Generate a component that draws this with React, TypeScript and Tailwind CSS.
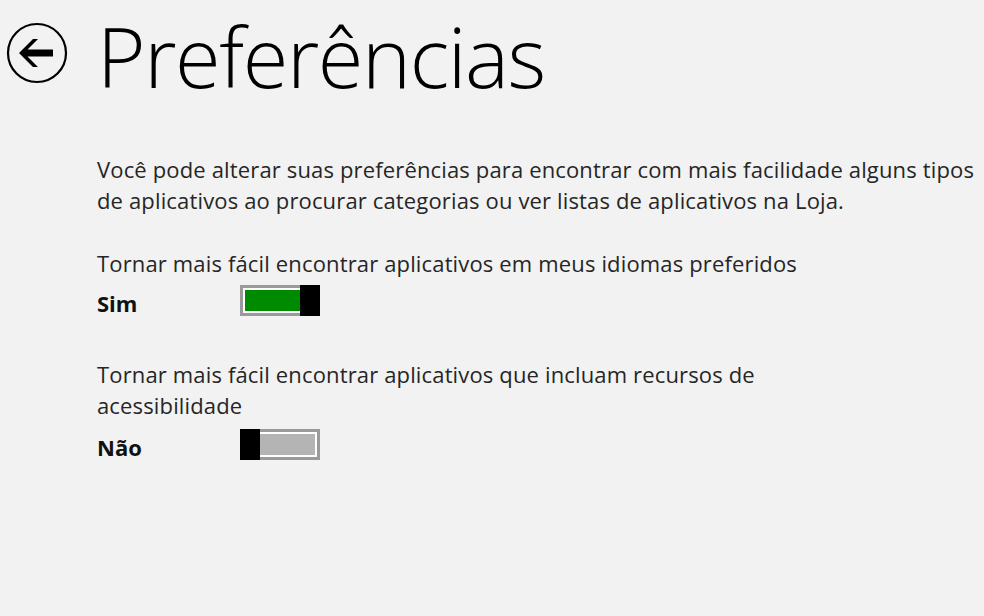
import React, { useState } from 'react';

interface ToggleProps {
  on: boolean;
  onChange: (v: boolean) => void;
}

const Toggle: React.FC<ToggleProps> = ({ on, onChange }) => {
  return (
    <button
      onClick={() => onChange(!on)}
      className="flex h-[31px] w-[80px] items-stretch"
    >
      {on ? (
        <>
          <div className="flex-1 border-[3px] border-r-0 border-[#9a9a9a] bg-white p-[2px] pr-0">
            <div className="h-full w-full bg-[#008a00]" />
          </div>
          <div className="w-[20px] bg-black" />
        </>
      ) : (
        <>
          <div className="w-[20px] bg-black" />
          <div className="flex-1 border-[3px] border-l-0 border-[#9a9a9a] bg-white p-[2px] pl-0">
            <div className="h-full w-full bg-[#b4b4b4]" />
          </div>
        </>
      )}
    </button>
  );
};

const BackButton = () => (
  <svg width="62" height="62" viewBox="0 0 62 62">
    <circle cx="31" cy="31" r="29" fill="none" stroke="#000" strokeWidth="2.2" />
    <path d="M13 31 L27 17 L32 17 L21.5 27.5 L47 27.5 L47 34.5 L21.5 34.5 L32 45 L27 45 Z" fill="#000" />
  </svg>
);

export default function App() {
  const [lang, setLang] = useState(true);
  const [access, setAccess] = useState(false);

  return (
    <div
      className="h-[616px] w-[984px] overflow-hidden bg-[#f2f2f2] text-[#262626]"
      style={{ fontFamily: '"Open Sans", "Liberation Sans", sans-serif' }}
    >
      <div className="flex items-start pl-[6px]">
        <div className="mt-[22px]">
          <BackButton />
        </div>
        <h1 className="ml-[29px] text-[83px] font-light leading-[112px] tracking-[-1.4px] text-black">
          Preferências
        </h1>
      </div>

      <div className="pl-[97px] pt-[42px] text-[22px] leading-[31px] tracking-[0.15px]">
        <p className="whitespace-nowrap">
          Você pode alterar suas preferências para encontrar com mais facilidade alguns tipos
          <br />
          de aplicativos ao procurar categorias ou ver listas de aplicativos na Loja.
        </p>

        <div className="mt-[32px]">
          <p>Tornar mais fácil encontrar aplicativos em meus idiomas preferidos</p>
          <div className="mt-[6px] flex h-[31px] items-center">
            <span className="w-[143px] pt-[6px] font-bold tracking-normal text-[#111]">Sim</span>
            <Toggle on={lang} onChange={setLang} />
          </div>
        </div>

        <div className="mt-[43px]">
          <p>
            Tornar mais fácil encontrar aplicativos que incluam recursos de
            <br />
            acessibilidade
          </p>
          <div className="mt-[8px] flex h-[31px] items-center">
            <span className="w-[143px] pt-[6px] font-bold tracking-normal text-[#111]">Não</span>
            <Toggle on={access} onChange={setAccess} />
          </div>
        </div>
      </div>
    </div>
  );
}
